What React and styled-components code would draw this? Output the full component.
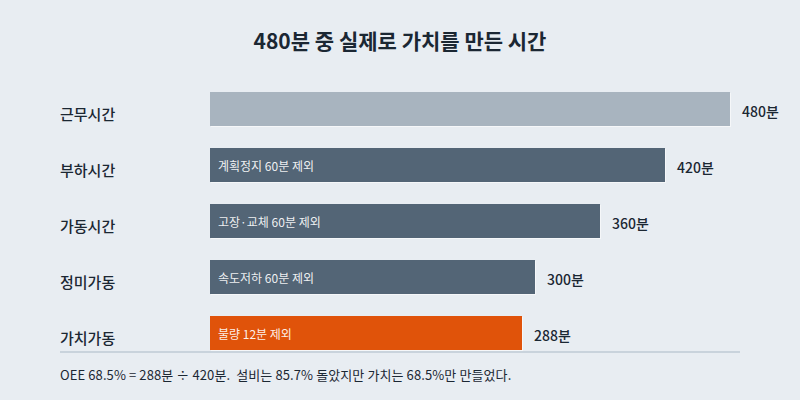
import React from 'react';
import styled, { createGlobalStyle } from 'styled-components';

const GlobalStyle = createGlobalStyle`
    body {
        margin: 0;
        background: #e8edf2;
        font-family: "Noto Sans CJK KR", "Noto Sans", sans-serif;
    }
`

const Page = styled.div`
    width: 800px;
    height: 400px;
    box-sizing: border-box;
    padding: 26px 60px 0 60px;
    background: #e8edf2;
    color: #1b2733;
`

const Title = styled.h1`
    margin: 0;
    text-align: center;
    font-size: 21px;
    font-weight: 700;
    line-height: 28px;
    color: #1b2733;
`

const Chart = styled.div`
    display: flex;
    flex-direction: column;
    gap: 22px;
    margin-top: 38px;
    padding-bottom: 1px;
    border-bottom: 2px solid #c9d3dc;
`

const Row = styled.div`
    display: grid;
    grid-template-columns: 150px 1fr;
    height: 34px;
    align-items: center;
`

const Label = styled.div`
    font-size: 15px;
    font-weight: 500;
    padding-top: 8px;
`

const Track = styled.div`
    display: flex;
    align-items: center;
    gap: 12px;
    height: 34px;
    min-width: 0;
`

const Bar = styled.div`
    height: 34px;
    flex: none;
    display: flex;
    align-items: center;
    box-sizing: border-box;
    padding-left: 8px;
    background: ${p => p.$color};
    box-shadow: 1px 1px 0 rgba(255, 255, 255, 0.55);
    color: rgba(255, 255, 255, 0.92);
    font-size: 12px;
    white-space: nowrap;
`

const Value = styled.span`
    flex: none;
    font-size: 14px;
    font-weight: 500;
    padding-top: 4px;
    white-space: nowrap;
`

const Note = styled.p`
    margin: 12px 0 0;
    font-size: 13px;
    letter-spacing: 0.1px;
    white-space: pre;
    color: #1b2733;
`

const MAX = 480;
const FULL = 520;

const rows = [
    { label: '근무시간', value: 480, color: '#a8b4bf', note: '' },
    { label: '부하시간', value: 420, color: '#536576', note: '계획정지 60분 제외' },
    { label: '가동시간', value: 360, color: '#536576', note: '고장·교체 60분 제외' },
    { label: '정미가동', value: 300, color: '#536576', note: '속도저하 60분 제외' },
    { label: '가치가동', value: 288, color: '#e0530a', note: '불량 12분 제외' },
];

class App extends React.Component{
    render(){
        return(
            <Page>
                <GlobalStyle />
                <Title>480분 중 실제로 가치를 만든 시간</Title>
                <Chart>
                    {rows.map(r => (
                        <Row key={r.label}>
                            <Label>{r.label}</Label>
                            <Track>
                                <Bar $color={r.color} style={{ width: Math.round(FULL * r.value / MAX) }}>
                                    {r.note}
                                </Bar>
                                <Value>{r.value}분</Value>
                            </Track>
                        </Row>
                    ))}
                </Chart>
                <Note>{'OEE 68.5% = 288분 ÷ 420분.  설비는 85.7% 돌았지만 가치는 68.5%만 만들었다.'}</Note>
            </Page>
        )
    }
}

export default App;
